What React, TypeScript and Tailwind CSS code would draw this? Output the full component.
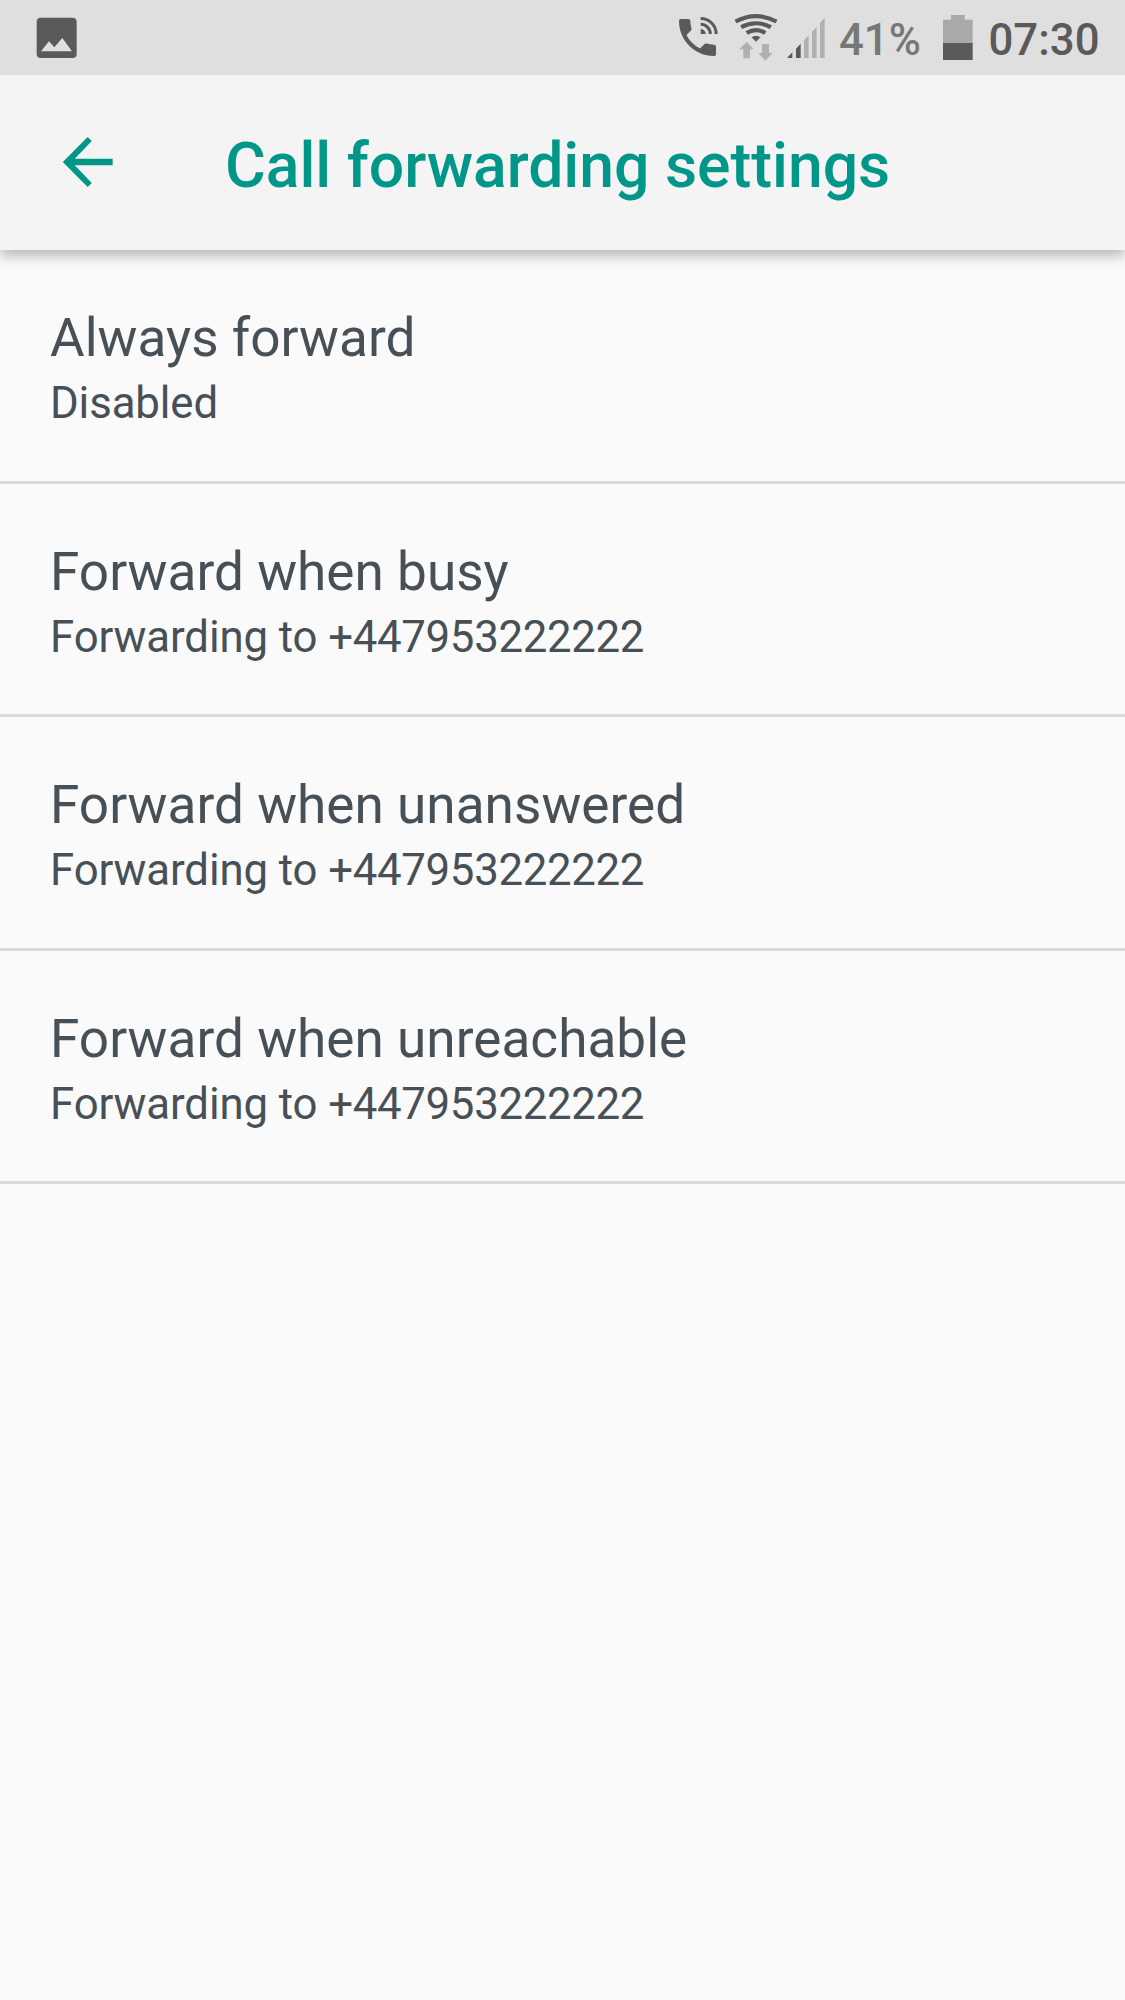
const settings = [
  { title: "Always forward", status: "Disabled", number: "" },
  { title: "Forward when busy", status: "Forwarding to", number: "+447953222222" },
  { title: "Forward when unanswered", status: "Forwarding to", number: "+447953222222" },
  { title: "Forward when unreachable", status: "Forwarding to", number: "+447953222222" },
];

function PictureIcon() {
  return (
    <svg className="h-[42px] w-[42px]" viewBox="0 0 126 126">
      <path
        fill="#5a5a5a"
        fillRule="evenodd"
        d="M15 2H109Q122 2 122 15V110Q122 123 109 123H15Q2 123 2 110V15Q2 2 15 2ZM15 103H108L79 63L55 91L39 73Z"
      />
    </svg>
  );
}

function CallIcon() {
  return (
    <svg className="h-[42px] w-[42px]" viewBox="0 0 126 126">
      <path
        fill="#5a5a5a"
        transform="translate(-15.5 -9.5) scale(6.17)"
        d="M20 15.5c-1.25 0-2.45-.2-3.57-.57-.35-.11-.74-.03-1.02.24l-2.2 2.2c-2.83-1.44-5.15-3.75-6.59-6.58l2.2-2.21c.28-.27.36-.66.25-1.01C8.7 6.45 8.5 5.25 8.5 4c0-.55-.45-1-1-1H4c-.55 0-1 .45-1 1 0 9.39 7.61 17 17 17 .55 0 1-.45 1-1v-3.5c0-.55-.45-1-1-1z"
      />
      <path fill="#5a5a5a" d="M68 54V39A15 15 0 0 1 83 54Z" />
      <path
        fill="none"
        stroke="#5a5a5a"
        strokeWidth="9"
        d="M68 25A29 29 0 0 1 97 54M68 7.500A46.500 46.500 0 0 1 114.500 54"
      />
    </svg>
  );
}

function WifiIcon() {
  return (
    <svg className="h-[52px] w-[46px]" viewBox="0 0 138 156">
      <g fill="none" stroke="#5a5a5a" strokeWidth="12.5">
        <path d="M7.500 34.500Q69 2 130.500 34.500" />
        <path d="M24.500 51.500Q69 28 113.500 51.500" />
        <path d="M41 69Q69 52 97 69" />
      </g>
      <path fill="#5a5a5a" d="M55.500 82Q69 73 82.500 82L69 95Z" />
      <path
        fill="#b0b0b0"
        d="M41 95L62 118H51V145H31V118H19ZM87 102H108V129H119L97 152L76 129H87Z"
      />
    </svg>
  );
}

function SignalIcon() {
  return (
    <svg className="h-[42px] w-[38px]" viewBox="0 0 114 126">
      <path fill="#5a5a5a" d="M0 123L16 106V123ZM27 95L41 80V123H27Z" />
      <path
        fill="#b0b0b0"
        d="M51 70L65 55V123H51ZM75 44L89 30V123H75ZM99 17L113 2V123H99Z"
      />
    </svg>
  );
}

function BatteryIcon() {
  return (
    <svg className="h-[46px] w-[30px]" viewBox="0 0 90 138">
      <path fill="#a9a9a9" d="M24 0H65V14H89V86H0V14H24Z" />
      <path fill="#5a5a5a" d="M0 84H89V135H0Z" />
    </svg>
  );
}

function BackIcon() {
  return (
    <svg className="h-[50px] w-[51px]" viewBox="0 0 153 150">
      <path
        fill="#009688"
        d="M77 0L89.500 12L38 65H152V85H38L89.500 138L77 150L2.500 75Z"
      />
    </svg>
  );
}

export default function App() {
  return (
    <div className="flex h-[2000px] w-[1125px] flex-col overflow-hidden bg-[#fafafa] font-['Roboto',sans-serif]">
      <div className="relative z-10 flex h-[75px] shrink-0 items-start bg-[#dfdfdf] text-[43.75px] leading-[52px] font-medium">
        <div className="ml-[35.500px] mt-[16.500px]">
          <PictureIcon />
        </div>
        <div className="ml-[600.500px] mt-[16px]">
          <CallIcon />
        </div>
        <div className="ml-[13px] mt-[10px]">
          <WifiIcon />
        </div>
        <div className="ml-[8px] mt-[17px]">
          <SignalIcon />
        </div>
        <div className="ml-[14px] mt-[13.500px] w-[104px] whitespace-nowrap text-[#777777]">41%</div>
        <div className="mt-[15px]">
          <BatteryIcon />
        </div>
        <div className="ml-[15.500px] mt-[13.500px] whitespace-nowrap text-[#5a5a5a]">07:30</div>
      </div>

      <header className="relative flex h-[175px] shrink-0 items-start bg-[#f4f4f4] shadow-[0_6px_12px_rgba(0,0,0,0.27)]">
        <button aria-label="Back" className="ml-[62px] mt-[62px]">
          <BackIcon />
        </button>
        <h1 className="ml-[112px] mt-[51px] text-[62.500px] leading-[80px] font-medium tracking-[-0.04px] whitespace-nowrap text-[#009688]">
          Call forwarding settings
        </h1>
      </header>

      <ul>
        {settings.map((item) => (
          <li
            key={item.title}
            className="h-[233.500px] border-b-3 border-[#dadada] pt-[56px] pl-[50px] text-[#474f57]"
          >
            <div className="text-[53.125px] leading-[64px] tracking-[0.02px]">{item.title}</div>
            <div className="mt-[7px] text-[43.750px] leading-[52px] tracking-[-0.1px]">
              {item.status} <span className="tracking-[-0.3px]">{item.number}</span>
            </div>
          </li>
        ))}
      </ul>
    </div>
  );
}
